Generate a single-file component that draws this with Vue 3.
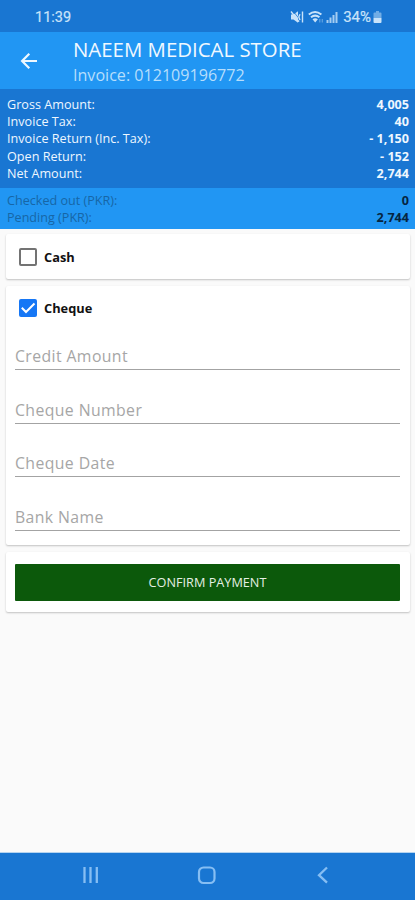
<script setup>
import { ref } from 'vue'

const totals = [
  { label: 'Gross Amount:', value: '4,005' },
  { label: 'Invoice Tax:', value: '40' },
  { label: 'Invoice Return (Inc. Tax):', value: '- 1,150' },
  { label: 'Open Return:', value: '- 152' },
  { label: 'Net Amount:', value: '2,744' },
]
const balance = [
  { label: 'Checked out (PKR):', value: '0' },
  { label: 'Pending (PKR):', value: '2,744' },
]
const fields = ['Credit Amount', 'Cheque Number', 'Cheque Date', 'Bank Name']
const cash = ref(false)
const cheque = ref(true)
</script>

<template>
  <div class="screen">
    <div class="status">
      <span class="time">11:39</span>
      <div class="indicators">
        <svg class="mute" width="14" height="14" viewBox="0 0 14 14">
          <path d="M1 4.500h2.500l4.500-3.200v11.400L3.500 9.500H1z" fill="currentColor" />
          <path d="M3 1l6 7.500" stroke="#1976d2" stroke-width=".8" />
          <path d="M1 1.500l8 10.300M10 4.200L8.800 7l1.200 3M12.500 1.500v11" fill="none" stroke="currentColor" stroke-width="1.400" />
        </svg>
        <svg class="wifi" width="16" height="14" viewBox="0 0 16 14">
          <path d="M.8 4.500q6.300-5 12.600 0M3 7.300q4.200-3.400 8.400 0" fill="none" stroke="currentColor" stroke-width="2" />
          <path d="M4.500 9.300q2.700-2 5.400 0L7.200 12.500z" fill="currentColor" />
          <path d="M11.800 12.500V9M14.300 9v3.500" stroke="currentColor" stroke-width="1.200" opacity=".4" />
        </svg>
        <svg class="signal" width="12" height="14" viewBox="0 0 12 14">
          <path d="M1.500 10v3M4.500 7.500V13M7.500 5v8M10.500 2v11" stroke="currentColor" stroke-width="2" opacity=".8" />
        </svg>
        <span class="percent">34%</span>
        <svg class="battery" width="9" height="14" viewBox="0 0 9 14">
          <path d="M3 1h3v1.500h1.500q1 0 1 1V8h-8V3.500q0-1 1-1H3z" fill="currentColor" opacity=".5" />
          <path d="M.5 8h8v4q0 1-1 1h-6q-1 0-1-1z" fill="currentColor" />
        </svg>
      </div>
    </div>

    <header class="appbar">
      <svg class="back" width="18" height="18" viewBox="0 0 18 18">
        <path d="M17 9H2.500M9.300 1.800L2.100 9l7.200 7.200" fill="none" stroke="#eef8ff" stroke-width="2.200" />
      </svg>
      <div class="heading">
        <h1>NAEEM MEDICAL STORE</h1>
        <p>Invoice: 012109196772</p>
      </div>
    </header>

    <section class="totals">
      <div v-for="row in totals" :key="row.label" class="row">
        <span>{{ row.label }}</span><b>{{ row.value }}</b>
      </div>
    </section>
    <section class="balance">
      <div v-for="row in balance" :key="row.label" class="row">
        <span>{{ row.label }}</span><b>{{ row.value }}</b>
      </div>
    </section>

    <main>
      <section class="card cash">
        <label class="option">
          <input v-model="cash" type="checkbox" />
          <span class="box" :class="{ checked: cash }"></span>
          <span class="name">Cash</span>
        </label>
      </section>

      <section class="card cheque">
        <label class="option">
          <input v-model="cheque" type="checkbox" />
          <span class="box" :class="{ checked: cheque }">
            <svg v-if="cheque" width="18" height="18" viewBox="0 0 18 18">
              <path d="M2.800 8.800l4.200 4.200L15.500 4.500" fill="none" stroke="#fff" stroke-width="2" />
            </svg>
          </span>
          <span class="name">Cheque</span>
        </label>
        <div class="fields">
          <input v-for="field in fields" :key="field" class="field" type="text" :placeholder="field" />
        </div>
      </section>

      <section class="card action">
        <button type="button"><span>CONFIRM PAYMENT</span></button>
      </section>
    </main>

    <nav>
      <svg width="20" height="20" viewBox="0 0 20 20">
        <path d="M3.500 2v16M9.500 2v16M15.800 2v16" stroke="currentColor" stroke-width="2.300" />
      </svg>
      <svg width="20" height="20" viewBox="0 0 20 20">
        <rect x="2" y="2.500" width="15.500" height="15.500" rx="4.500" fill="none" stroke="currentColor" stroke-width="2.200" />
      </svg>
      <svg width="20" height="20" viewBox="0 0 20 20">
        <path d="M14 2.500L6 10.200l8 7.500" fill="none" stroke="currentColor" stroke-width="2.300" />
      </svg>
    </nav>
  </div>
</template>

<style>
body {
  margin: 0;
}
</style>

<style scoped>
.screen {
  display: flex;
  flex-direction: column;
  width: 415px;
  height: 900px;
  overflow: hidden;
  background: #fafafa;
  font-family: "Open Sans", "Noto Sans", sans-serif;
}
.status {
  display: flex;
  justify-content: space-between;
  align-items: center;
  box-sizing: border-box;
  height: 32px;
  padding: 2px 33px 0 35px;
  background: #1976d2;
  color: #c9e3fa;
  font-family: Roboto, sans-serif;
  font-size: 14.500px;
  font-weight: 400;
}
.time,
.percent {
  -webkit-text-stroke: .2px currentColor;
}
.indicators {
  display: flex;
  align-items: center;
}
.wifi {
  margin-left: 4px;
}
.signal {
  margin: 0 5px 0 2px;
}
.percent {
  font-size: 15px;
}
.battery {
  margin-left: 2px;
}
.appbar {
  display: flex;
  align-items: center;
  box-sizing: border-box;
  height: 57px;
  padding-left: 20px;
  background: #2196f3;
}
.heading {
  margin-left: 35px;
}
h1 {
  margin: 0;
  color: #f0f8ff;
  font-size: 20.400px;
  font-weight: 400;
  line-height: 27px;
}
p {
  margin: 0;
  padding-top: 1px;
  color: #b6defc;
  font-size: 16.100px;
  line-height: 22px;
}
.totals,
.balance {
  box-sizing: border-box;
  padding: 6.700px 6px 0 7px;
  font-size: 12.600px;
}
.totals {
  height: 99px;
  background: #1976d2;
  color: #eef7ff;
}
.totals span {
  font-weight: 500;
  letter-spacing: .02px;
}
.balance {
  height: 40.500px;
  padding-top: 3.500px;
  background: #2196f3;
  color: #1766a6;
}
.balance b {
  color: #062440;
}
.row {
  display: flex;
  justify-content: space-between;
  height: 17.300px;
  line-height: 17.300px;
}
main {
  display: flex;
  flex: 1;
  flex-direction: column;
  gap: 7px;
  padding: 5.500px 5px 0 6px;
}
.card {
  box-sizing: border-box;
  border-radius: 2px;
  background: #fff;
  box-shadow: 0 1px 2px rgba(0, 0, 0, .23);
}
.cash {
  height: 45px;
  padding: 14px 0 0 12.500px;
}
.cheque {
  height: 259px;
  padding: 13px 10px 0;
}
.cheque .option {
  margin-left: 2.500px;
}
.option {
  display: flex;
  align-items: center;
  height: 18px;
}
.option input {
  display: none;
}
.box {
  box-sizing: border-box;
  width: 18px;
  height: 18px;
  border: 2px solid #737373;
  border-radius: 2px;
}
.box.checked {
  border: 0;
  background: #1677f5;
}
.box svg {
  display: block;
}
.name {
  margin-left: 7.500px;
  color: #111;
  font-size: 12.800px;
  font-weight: 700;
}
.fields {
  display: flex;
  flex-direction: column;
  gap: 24px;
  margin: 23px 0 0 -1px;
}
.field {
  box-sizing: border-box;
  width: 100%;
  height: 29.800px;
  padding: 3px 0 0;
  border: 0;
  border-bottom: 1px solid #a3a3a3;
  outline: 0;
  background: transparent;
  font-family: inherit;
  font-size: 15.800px;
  letter-spacing: .4px;
}
.field::placeholder {
  color: #a6a6a6;
  opacity: 1;
}
.action {
  height: 60px;
  padding: 12px 10px 0 9px;
}
button {
  display: block;
  width: 100%;
  height: 37px;
  padding: 0 0 2px;
  border: 0;
  border-radius: 1px;
  background: #0c590b;
  color: #e4f0e4;
  font-family: inherit;
  font-size: 12.700px;
}
nav {
  display: flex;
  justify-content: space-between;
  align-items: center;
  box-sizing: border-box;
  height: 48px;
  padding: 0 82px 3px 81px;
  border-top: 1px solid #b5d4f0;
  background: #1976d2;
  color: #86bef3;
}
nav svg {
  display: block;
}
</style>
